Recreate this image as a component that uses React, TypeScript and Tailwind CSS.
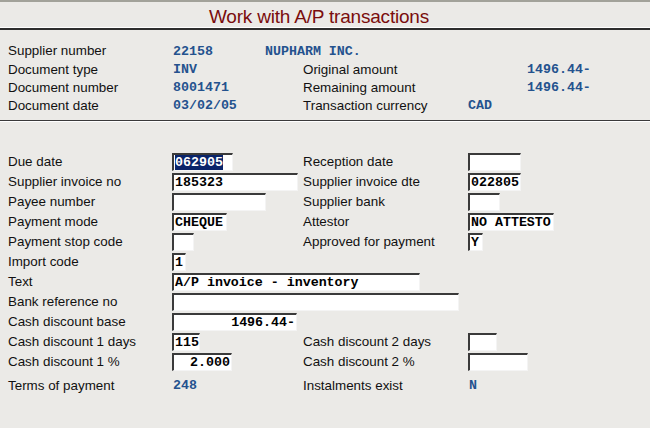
import React from "react";

const sans = { fontFamily: '"Liberation Sans", Arial, sans-serif' };

function Label({ children, w }: { children?: React.ReactNode; w: string }) {
  return (
    <div className={`${w} shrink-0 text-[13.4px] leading-none text-[#111]`} style={sans}>
      {children}
    </div>
  );
}

function Val({ children, className = "" }: { children?: React.ReactNode; className?: string }) {
  return (
    <div
      className={`shrink-0 font-['Liberation_Mono',monospace] font-bold text-[13.3px] leading-none text-[#24528e] whitespace-pre ${className}`}
    >
      {children}
    </div>
  );
}

function Box({
  w,
  children,
  right,
  selected,
}: {
  w: string;
  children?: React.ReactNode;
  right?: boolean;
  selected?: boolean;
}) {
  return (
    <div
      className={`${w} h-[18px] shrink-0 bg-white border-t-2 border-l-2 border-t-[#3a3a3a] border-l-[#3a3a3a] border-b border-r border-b-[#f4f4f4] border-r-[#f4f4f4] flex items-center ${
        right ? "justify-end pr-[1px]" : "pl-[1px]"
      } font-['Liberation_Mono',monospace] font-bold text-[13.3px] leading-none text-black whitespace-pre overflow-hidden`}
    >
      {selected ? (
        <span className="bg-[#0a246a] text-white h-[15px] flex items-center">{children}</span>
      ) : (
        children
      )}
    </div>
  );
}

function HRow({ children }: { children: React.ReactNode }) {
  return <div className="flex items-center h-[18.3px]">{children}</div>;
}

function Row({ children, h = "h-[20px]" }: { children: React.ReactNode; h?: string }) {
  return <div className={`flex items-center ${h}`}>{children}</div>;
}

export default function App() {
  return (
    <div className="w-[650px] h-[428px] bg-[#ebeae7] overflow-hidden relative">
      <div className="h-[2px] bg-[#a2a29a]" />
      {/* Title */}
      <div className="h-[25px] flex items-center justify-center pt-[3px]">
        <div className="text-[19px] leading-none text-[#7a0d0d] tracking-[-0.2px] pr-[12px]" style={sans}>
          Work with A/P transactions
        </div>
      </div>
      <div className="h-px bg-white" />
      <div className="h-[2px] bg-[#2e2e2e]" />

      {/* Header section */}
      <div className="pl-[8px] pt-[12px] h-[90px]">
        <HRow>
          <Label w="w-[165px]">Supplier number</Label>
          <Val className="w-[92px]">22158</Val>
          <Val>NUPHARM INC.</Val>
        </HRow>
        <HRow>
          <Label w="w-[165px]">Document type</Label>
          <Val className="w-[130px]">INV</Val>
          <Label w="w-[224px]">Original amount</Label>
          <Val>1496.44-</Val>
        </HRow>
        <HRow>
          <Label w="w-[165px]">Document number</Label>
          <Val className="w-[130px]">8001471</Val>
          <Label w="w-[224px]">Remaining amount</Label>
          <Val>1496.44-</Val>
        </HRow>
        <HRow>
          <Label w="w-[165px]">Document date</Label>
          <Val className="w-[130px]">03/02/05</Val>
          <Label w="w-[165px]">Transaction currency</Label>
          <Val>CAD</Val>
        </HRow>
      </div>
      <div className="h-px bg-[#3a3a3a]" />
      <div className="h-px bg-white" />

      {/* Lower section */}
      <div className="pl-[8px] pt-[30px]">
        <Row>
          <Label w="w-[164px]">Due date</Label>
          <div className="w-[131px] shrink-0">
            <Box w="w-[61px]" selected>
              062905
            </Box>
          </div>
          <Label w="w-[165px]">Reception date</Label>
          <Box w="w-[53px]" />
        </Row>
        <Row>
          <Label w="w-[164px]">Supplier invoice no</Label>
          <div className="w-[131px] shrink-0">
            <Box w="w-[126px]">185323</Box>
          </div>
          <Label w="w-[165px]">Supplier invoice dte</Label>
          <Box w="w-[53px]">022805</Box>
        </Row>
        <Row>
          <Label w="w-[164px]">Payee number</Label>
          <div className="w-[131px] shrink-0">
            <Box w="w-[94px]" />
          </div>
          <Label w="w-[165px]">Supplier bank</Label>
          <Box w="w-[32px]" />
        </Row>
        <Row>
          <Label w="w-[164px]">Payment mode</Label>
          <div className="w-[131px] shrink-0">
            <Box w="w-[55px]">CHEQUE</Box>
          </div>
          <Label w="w-[165px]">Attestor</Label>
          <Box w="w-[86px]">NO ATTESTO</Box>
        </Row>
        <Row>
          <Label w="w-[164px]">Payment stop code</Label>
          <div className="w-[131px] shrink-0">
            <Box w="w-[22px]" />
          </div>
          <Label w="w-[165px]">Approved for payment</Label>
          <Box w="w-[15px]">Y</Box>
        </Row>
        <Row>
          <Label w="w-[164px]">Import code</Label>
          <Box w="w-[14px]">1</Box>
        </Row>
        <Row>
          <Label w="w-[164px]">Text</Label>
          <Box w="w-[248px]">A/P invoice - inventory</Box>
        </Row>
        <Row>
          <Label w="w-[164px]">Bank reference no</Label>
          <Box w="w-[287px]" />
        </Row>
        <Row>
          <Label w="w-[164px]">Cash discount base</Label>
          <Box w="w-[125px]" right>
            1496.44-
          </Box>
        </Row>
        <Row>
          <Label w="w-[164px]">Cash discount 1 days</Label>
          <div className="w-[131px] shrink-0">
            <Box w="w-[28px]">115</Box>
          </div>
          <Label w="w-[165px]">Cash discount 2 days</Label>
          <Box w="w-[29px]" />
        </Row>
        <Row>
          <Label w="w-[164px]">Cash discount 1 %</Label>
          <div className="w-[131px] shrink-0">
            <Box w="w-[60px]" right>
              2.000
            </Box>
          </div>
          <Label w="w-[165px]">Cash discount 2 %</Label>
          <Box w="w-[60px]" />
        </Row>
        <Row h="h-[28px]">
          <Label w="w-[165px]">Terms of payment</Label>
          <Val className="w-[130px]">248</Val>
          <Label w="w-[166px]">Instalments exist</Label>
          <Val>N</Val>
        </Row>
      </div>
    </div>
  );
}
